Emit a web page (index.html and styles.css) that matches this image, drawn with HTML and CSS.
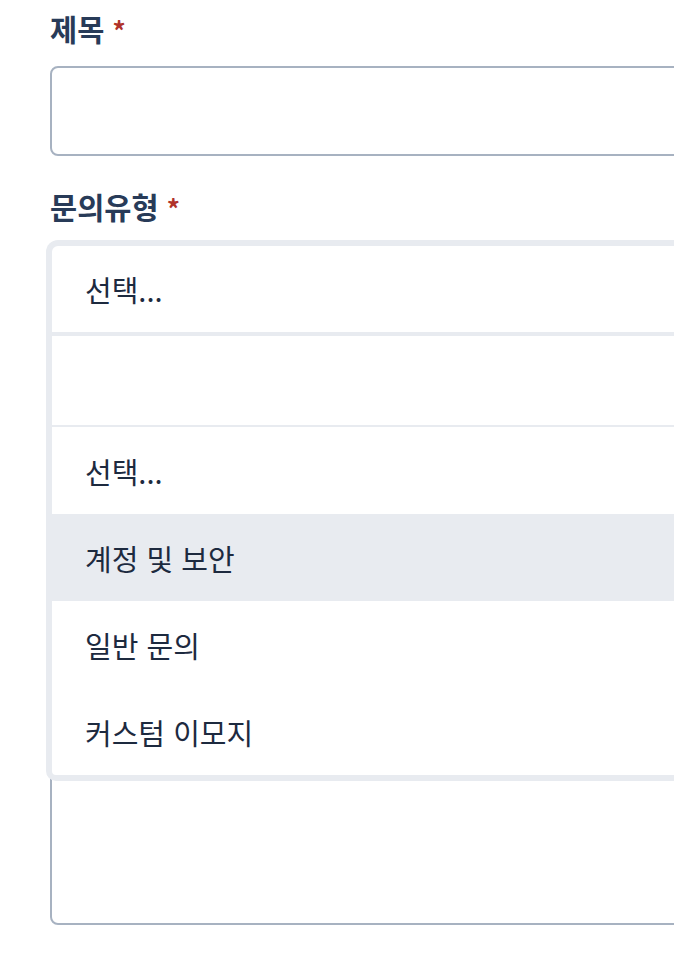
FILE: index.html
```html
<!DOCTYPE html>
<html lang="ko">
<head>
<meta charset="utf-8">
<title>문의하기</title>
<link rel="stylesheet" href="styles.css">
</head>
<body>
<div class="page">
  <form class="form">
    <div class="field">
      <label class="label" for="title">제목 <span class="req">*</span></label>
      <input class="input" id="title" type="text">
    </div>
    <div class="field">
      <label class="label">문의유형 <span class="req">*</span></label>
      <div class="select">
        <div class="select-control">선택...</div>
        <ul class="select-menu">
          <li class="select-search"></li>
          <li class="option">선택...</li>
          <li class="option option-active">계정 및 보안</li>
          <li class="option">일반 문의</li>
          <li class="option">커스텀 이모지</li>
        </ul>
      </div>
    </div>
    <div class="field">
      <label class="label" for="body">내용 <span class="req">*</span></label>
      <textarea class="textarea" id="body"></textarea>
    </div>
  </form>
</div>
</body>
</html>
```

FILE: styles.css
```css
html, body {
  margin: 0;
  padding: 0;
  background: #ffffff;
  overflow: hidden;
}

.page {
  padding: 10px 0 0 50px;
  font-family: "Noto Sans CJK KR", "Noto Sans", sans-serif;
  color: #1d2a3f;
}

.form {
  width: 720px;
  display: flex;
  flex-direction: column;
}

.field {
  display: flex;
  flex-direction: column;
  margin-bottom: 32px;
}

.label {
  font-size: 29.5px;
  line-height: 36px;
  font-weight: 700;
  color: #283b58;
  margin-bottom: 18px;
}

.req {
  color: #b0322a;
  font-size: 26px;
}

.input {
  box-sizing: border-box;
  height: 90px;
  border: 2px solid #a7b2c1;
  border-radius: 8px;
  background: #fff;
  outline: none;
  margin: 0;
}

.select {
  position: relative;
}

.select-control {
  box-sizing: border-box;
  height: 90px;
  border: 2px solid #e8ebf0;
  border-radius: 8px 8px 0 0;
  box-shadow: 0 0 0 4px #e8ebf0;
  padding-left: 33px;
  display: flex;
  align-items: center;
  font-size: 29px;
  color: #1d2a3f;
  background: #fff;
}

.select-menu {
  position: absolute;
  top: 100%;
  left: -4px;
  right: -4px;
  z-index: 10;
  margin: 0;
  padding: 0;
  list-style: none;
  background: #fff;
  border: 6px solid #e8ebf0;
  border-top-width: 2px;
  border-radius: 0 0 10px 10px;
  overflow: hidden;
}

.select-search {
  height: 89px;
  border-bottom: 2px solid #e8ebf0;
}

.option {
  height: 87px;
  display: flex;
  align-items: center;
  padding-left: 33px;
  font-size: 29px;
  color: #1d2a3f;
}

.option-active {
  background: #e8ebf0;
}

.textarea {
  box-sizing: border-box;
  height: 503px;
  border: 2px solid #a7b2c1;
  border-radius: 8px;
  resize: none;
  outline: none;
  margin: 0;
  background: #fff;
}
```
